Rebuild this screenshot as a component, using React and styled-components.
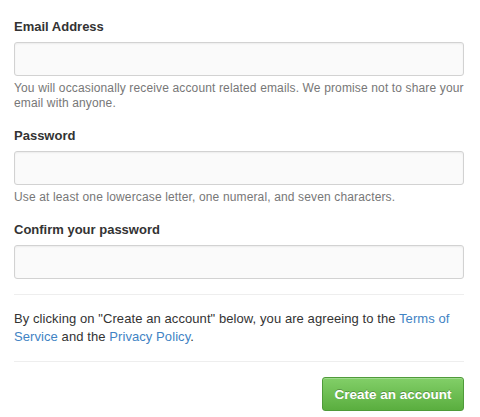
import styled, { createGlobalStyle } from "styled-components";

const GlobalStyle = createGlobalStyle`
  html, body {
    margin: 0;
    padding: 0;
    background: #ffffff;
  }
  body {
    font-family: "Liberation Sans", Arial, Helvetica, sans-serif;
    color: #333333;
  }
`;

const Form = styled.form`
  width: 450px;
  padding: 18px 16px 0 14px;
`;

const FormGroup = styled.div`
  display: flex;
  flex-direction: column;
  margin-bottom: ${(p) => (p.$last ? "15px" : "16px")};
`;

const Label = styled.label`
  font-size: 13px;
  font-weight: bold;
  line-height: 18px;
  color: #333333;
  margin-bottom: 6px;
`;

const Input = styled.input`
  box-sizing: border-box;
  width: 100%;
  height: 34px;
  margin: 0;
  padding: 6px 8px;
  border: 1px solid #d2d2d2;
  border-radius: 3px;
  background: #fafafa;
  box-shadow: inset 0 1px 2px rgba(0, 0, 0, 0.06);
  font-family: inherit;
  font-size: 13px;
  outline: none;
`;

const Hint = styled.p`
  margin: 5px 0 0;
  font-size: 12px;
  line-height: 15px;
  letter-spacing: 0.14px;
  color: #777777;
`;

const Divider = styled.hr`
  border: 0;
  border-top: 1px solid #eeeeee;
  margin: 0;
`;

const Terms = styled.p`
  margin: 15px 0;
  font-size: 13px;
  line-height: 18px;
  letter-spacing: 0.08px;
  color: #333333;

  a {
    color: #4183c4;
    text-decoration: none;
  }
`;

const Actions = styled.div`
  display: flex;
  justify-content: flex-end;
  padding-top: 15px;
`;

const Button = styled.button`
  box-sizing: border-box;
  height: 34px;
  width: 142px;
  padding: 0 10px;
  border: 1px solid #4f9b3a;
  border-radius: 3px;
  background: linear-gradient(to bottom, #82cf68, #5aae3f);
  box-shadow: inset 0 1px 0 rgba(255, 255, 255, 0.25);
  color: #ffffff;
  font-family: inherit;
  font-size: 13.5px;
  font-weight: bold;
  text-shadow: 0 -1px 0 rgba(0, 0, 0, 0.25);
  cursor: pointer;
`;

export default function App() {
  return (
    <>
      <GlobalStyle />
      <Form onSubmit={(e) => e.preventDefault()}>
        <FormGroup>
          <Label htmlFor="email">Email Address</Label>
          <Input id="email" type="text" />
          <Hint>
            You will occasionally receive account related emails. We promise not to share your
            email with anyone.
          </Hint>
        </FormGroup>

        <FormGroup>
          <Label htmlFor="password">Password</Label>
          <Input id="password" type="password" />
          <Hint>Use at least one lowercase letter, one numeral, and seven characters.</Hint>
        </FormGroup>

        <FormGroup $last>
          <Label htmlFor="confirm">Confirm your password</Label>
          <Input id="confirm" type="password" />
        </FormGroup>

        <Divider />
        <Terms>
          By clicking on "Create an account" below, you are agreeing to the{" "}
          <a href="#terms">Terms of Service</a> and the <a href="#privacy">Privacy Policy</a>.
        </Terms>
        <Divider />

        <Actions>
          <Button type="submit">Create an account</Button>
        </Actions>
      </Form>
    </>
  );
}
